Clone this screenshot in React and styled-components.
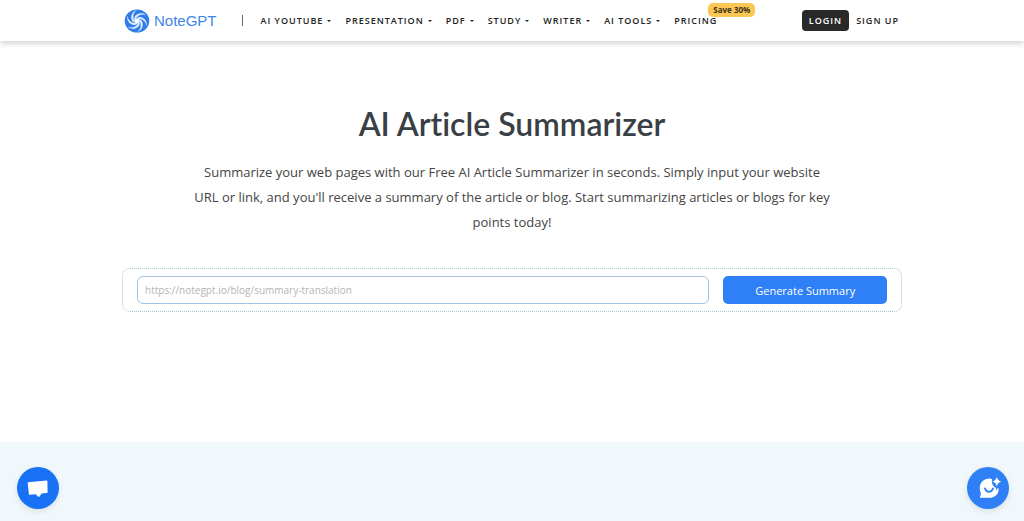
import React, { useState } from 'react'
import styled, { createGlobalStyle } from 'styled-components'

const menuItems = [
    { name: 'AI YouTube', dropdown: true },
    { name: 'Presentation', dropdown: true },
    { name: 'PDF', dropdown: true },
    { name: 'Study', dropdown: true },
    { name: 'Writer', dropdown: true },
    { name: 'AI Tools', dropdown: true },
    { name: 'Pricing', tag: 'Save 30%' },
]

const blades = [0, 60, 120, 180, 240, 300]

function Swirl() {
    return (
        <svg width="26" height="24" viewBox="-13 -12 26 24" aria-hidden="true">
            <ellipse rx="12.3" ry="11.5" fill="#2f7de9" />
            {blades.map((angle) => (
                <path
                    key={angle}
                    d="M-2.6 -1.2C-3.4 -4.6 -0.2 -7.6 3.8 -7.8C6 -7.8 7.8 -7.2 9 -5.8C6.4 -6.8 4 -6.6 2 -5.4C-0.2 -4.2 -1 -2.6 -0.6 -1Z"
                    transform={`rotate(${angle})`}
                    fill="#dcebff"
                />
            ))}
            <circle r="2.2" fill="#fff" />
        </svg>
    )
}

function Header() {
    return (
        <Bar>
            <Container>
                <Logo href="#">
                    <Swirl />
                    NoteGPT
                </Logo>
                <Divider />
                <Menu>
                    {menuItems.map((item) => (
                        <MenuLink href="#" key={item.name}>
                            {item.name}
                            {item.dropdown && <Caret />}
                            {item.tag && <Tag>{item.tag}</Tag>}
                        </MenuLink>
                    ))}
                </Menu>
                <Account>
                    <LoginLink href="#">Login</LoginLink>
                    <MenuLink href="#">Sign up</MenuLink>
                </Account>
            </Container>
        </Bar>
    )
}

function Summarizer() {
    const [url, setUrl] = useState('')
    return (
        <Hero>
            <Title>AI Article Summarizer</Title>
            <Intro>
                Summarize your web pages with our Free AI Article Summarizer in seconds. Simply input your website
                URL or link, and you'll receive a summary of the article or blog. Start summarizing articles or blogs for key
                points today!
            </Intro>
            <Form onSubmit={(e) => e.preventDefault()}>
                <UrlInput
                    type="text"
                    aria-label="Article URL"
                    placeholder="https://notegpt.io/blog/summary-translation"
                    value={url}
                    onChange={(e) => setUrl(e.target.value)}
                />
                <SubmitButton type="submit">Generate Summary</SubmitButton>
            </Form>
        </Hero>
    )
}

function App() {
    return (
        <Page>
            <GlobalStyle />
            <Header />
            <Summarizer />
            <Band />
            <RoundButton $side="left" $color="#1972f5" aria-label="Messages">
                <svg width="42" height="42" viewBox="0 0 42 42" aria-hidden="true">
                    <path d="M11.2 15.3 29.8 13.6Q30.4 13.6 30.4 14.2L30.6 25.2Q30.6 25.9 30 26L24.6 26.6 22 30.2 18.6 27.2 12.6 27.8Q12 27.8 11.9 27.2L10.7 16Q10.6 15.4 11.2 15.3Z" fill="#fff" />
                </svg>
            </RoundButton>
            <RoundButton $side="right" $color="#2f80f6" aria-label="AI assistant">
                <svg width="42" height="42" viewBox="0 0 42 42" aria-hidden="true">
                    <path d="M22.5 11.5C16.5 11.5 12.8 15.8 12.8 21Q12.8 24.4 14 26.4L12.8 30.8H22.5C27.8 30.8 31.9 26.9 31.7 21.4C27.2 21.4 24.2 17.5 25 12Q24 11.5 22.5 11.5Z" fill="#fff" />
                    <path d="M18 21.5C19.5 26 24.5 26 26 21.5" fill="none" stroke="#2f80f6" strokeWidth="1.9" strokeLinecap="round" />
                    <path d="M29.8 10Q30.8 13.7 34.3 14.6Q30.8 15.5 29.8 19.2Q28.8 15.5 25.3 14.6Q28.8 13.7 29.8 10Z" fill="#fff" stroke="#2f80f6" strokeWidth="2.4" paintOrder="stroke" />
                </svg>
            </RoundButton>
        </Page>
    )
}

const GlobalStyle = createGlobalStyle`
*{
    box-sizing:border-box;
}
body{
    margin:0;
    background:#fff;
    color:#3a3f45;
    font-family:"Open Sans", sans-serif;
}
a{
    color:inherit;
    text-decoration:none;
}
`
const Page = styled.div`
min-height:100vh;
display:flex;
flex-direction:column;
`
const Bar = styled.header`
background:#fff;
box-shadow:0 2px 6px rgba(0,0,0,0.2);
`
const Container = styled.div`
max-width:780px;
height:41px;
margin:0 auto;
padding:0 3px 0 2px;
display:flex;
align-items:center;
`
const Logo = styled.a`
display:flex;
align-items:center;
gap:4px;
color:#4285e8;
font:15px "Liberation Sans", sans-serif;
`
const Divider = styled.span`
width:1px;
height:11px;
margin:0 18px 0 25px;
background:#666;
`
const Menu = styled.nav`
display:flex;
align-items:center;
gap:14px;
`
const MenuLink = styled.a`
position:relative;
display:flex;
align-items:center;
color:#222;
font-size:9px;
font-weight:600;
letter-spacing:1px;
text-transform:uppercase;
white-space:nowrap;
`
const Caret = styled.span`
margin-left:4px;
border:2px solid transparent;
border-top-color:#222;
border-bottom:0;
`
const Tag = styled.span`
position:absolute;
left:34px;
bottom:10px;
padding:0 5px;
border-radius:5px;
background:#fbc653;
color:#3d3219;
font-size:8px;
font-weight:700;
line-height:14px;
letter-spacing:0;
text-transform:none;
`
const Account = styled.div`
margin-left:auto;
display:flex;
align-items:center;
gap:7px;
`
const LoginLink = styled(MenuLink)`
height:21px;
padding:0 7px;
border-radius:4px;
background:#292929;
color:#fff;
`
const Hero = styled.main`
width:100%;
max-width:780px;
margin:0 auto;
padding:59px 0 130px;
text-align:center;
`
const Title = styled.h1`
margin:0 0 12px;
color:#3a3f45;
font-family:Lato, sans-serif;
font-size:32px;
font-weight:600;
font-variant-ligatures:none;
line-height:48px;
`
const Intro = styled.p`
max-width:640px;
margin:0 auto 33px;
color:#444;
font-size:13px;
line-height:25px;
`
const Form = styled.form`
display:grid;
grid-template-columns:7fr 2fr;
gap:14px;
padding:7px 14px;
border:1px dotted #a9c5d8;
border-radius:8px;
`
const UrlInput = styled.input`
min-width:0;
height:28px;
padding:0 7px;
border:1px solid #9fc3e6;
border-radius:6px;
outline:none;
background:#fff;
color:#444;
font:10px "Open Sans", sans-serif;
&::placeholder{
    color:#b5b5b5;
}
`
const SubmitButton = styled.button`
height:28px;
padding:0;
border:0;
border-radius:5px;
background:#2f80f6;
color:#fff;
font:11px "Open Sans", sans-serif;
cursor:pointer;
`
const Band = styled.section`
flex:1;
min-height:79px;
background:#f1f8fb;
`
const RoundButton = styled.button`
position:fixed;
bottom:12px;
${(props) => props.$side}:${(props) => (props.$side === 'left' ? 17 : 15)}px;
width:42px;
height:42px;
padding:0;
border:0;
border-radius:50%;
background:${(props) => props.$color};
box-shadow:0 2px 6px rgba(0,0,0,0.1);
cursor:pointer;
`
export default App
